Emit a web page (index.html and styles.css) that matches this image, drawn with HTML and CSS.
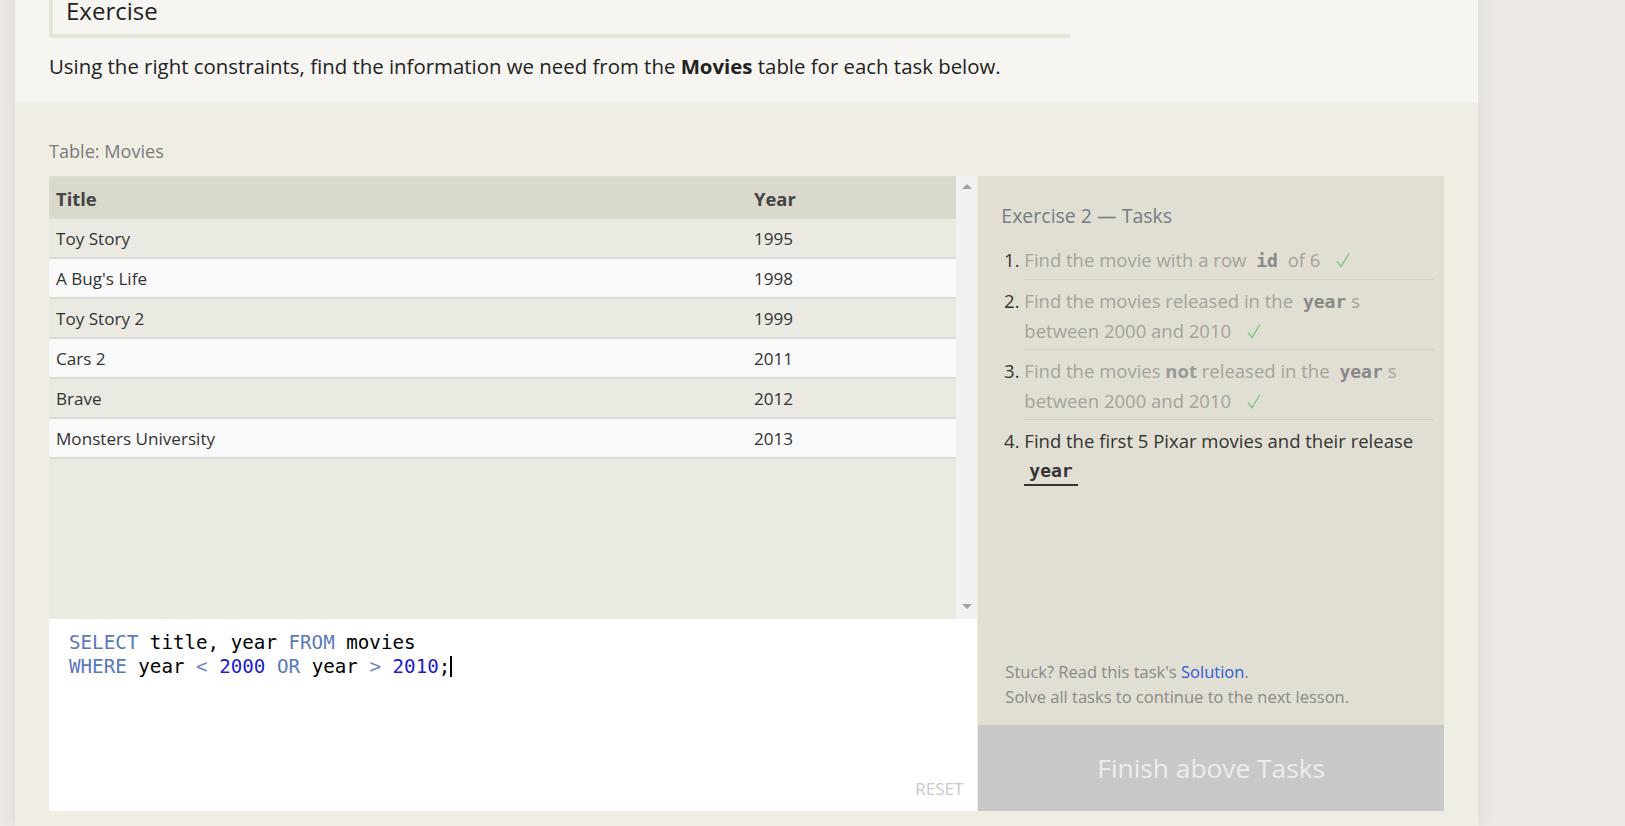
FILE: index.html
```html
<!DOCTYPE html>
<html lang="en">
<head>
<meta charset="utf-8">
<title>SQL Lesson – Exercise 2</title>
<link rel="stylesheet" href="styles.css">
</head>
<body>
<div class="main">
  <section class="intro">
    <div class="ex-head"><h2>Exercise</h2></div>
    <p class="lead">Using the right constraints, find the information we need from the <strong>Movies</strong> table for each task below.</p>
  </section>
  <section class="exercise">
    <div class="table-label">Table: Movies</div>
    <div class="workspace">
      <div class="left">
        <div class="results">
          <div class="table-scroll">
            <table class="movies">
              <thead>
                <tr><th class="c-title">Title</th><th class="c-year">Year</th></tr>
              </thead>
              <tbody>
                <tr><td>Toy Story</td><td>1995</td></tr>
                <tr><td>A Bug's Life</td><td>1998</td></tr>
                <tr><td>Toy Story 2</td><td>1999</td></tr>
                <tr><td>Cars 2</td><td>2011</td></tr>
                <tr><td>Brave</td><td>2012</td></tr>
                <tr><td>Monsters University</td><td>2013</td></tr>
              </tbody>
            </table>
          </div>
          <div class="scrollbar">
            <span class="arrow up"></span>
            <span class="arrow down"></span>
          </div>
        </div>
        <div class="editor">
          <pre class="code"><span class="kw">SELECT</span> title, year <span class="kw">FROM</span> movies
<span class="kw">WHERE</span> year <span class="op">&lt;</span> <span class="num">2000</span> <span class="kw">OR</span> year <span class="op">&gt;</span> <span class="num">2010</span>;<span class="caret"></span></pre>
          <div class="reset-row"><span class="reset">RESET</span></div>
        </div>
      </div>
      <div class="tasks">
        <div class="tasks-body">
          <h3 class="tasks-title">Exercise 2 — Tasks</h3>
          <ol class="task-list">
            <li class="done"><span>Find the movie with a row <code>id</code> of 6 <svg class="check" viewBox="0 0 14 16" width="14" height="16"><path d="M1 9.5 L5 14.5 L13 1.5" fill="none" stroke="#7cc87c" stroke-width="1.4"/></svg></span></li>
            <li class="done"><span>Find the movies released in the <code>year</code>s between 2000 and 2010 <svg class="check" viewBox="0 0 14 16" width="14" height="16"><path d="M1 9.5 L5 14.5 L13 1.5" fill="none" stroke="#7cc87c" stroke-width="1.4"/></svg></span></li>
            <li class="done"><span>Find the movies <strong>not</strong> released in the <code>year</code>s between 2000 and 2010 <svg class="check" viewBox="0 0 14 16" width="14" height="16"><path d="M1 9.5 L5 14.5 L13 1.5" fill="none" stroke="#7cc87c" stroke-width="1.4"/></svg></span></li>
            <li class="current"><span>Find the first 5 Pixar movies and their release <code class="active">year</code></span></li>
          </ol>
          <div class="help">
            <div>Stuck? Read this task's <a class="link">Solution</a>.</div>
            <div>Solve all tasks to continue to the next lesson.</div>
          </div>
        </div>
        <div class="finish">Finish above Tasks</div>
      </div>
    </div>
  </section>
</div>
</body>
</html>
```

FILE: styles.css
```css
html, body {
  margin: 0;
  padding: 0;
}
body {
  background: #ece8e4;
  font-family: "Open Sans", "Liberation Sans", sans-serif;
  color: #333;
  height: 826px;
  overflow: hidden;
}
.main {
  margin-left: 15px;
  width: 1463px;
  box-shadow: -6px 0 10px rgba(0, 0, 0, 0.03), 6px 0 12px rgba(0, 0, 0, 0.04);
}

/* intro */
.intro {
  background: #f6f5f1;
  padding: 0 34px 22px;
  margin-top: -15px;
}
.ex-head {
  width: 1004px;
  border-left: 4px solid #e6e4da;
  border-bottom: 4px solid #e6e4da;
  padding: 8px 0 5px 13px;
}
.ex-head h2 {
  margin: 0;
  font-weight: 400;
  font-size: 24px;
  line-height: 36px;
  color: #222;
}
.lead {
  margin: 14px 0 0;
  font-size: 20.4px;
  line-height: 28px;
  color: #222;
}
.lead strong { font-weight: 700; }

/* exercise area */
.exercise {
  background: #f0ede5;
  padding: 37px 34px 15px;
}
.table-label {
  font-size: 18.1px;
  line-height: 24px;
  color: #7a7a7a;
  margin-bottom: 13px;
}
.workspace {
  display: flex;
  height: 635px;
}
.left {
  width: 929px;
  display: flex;
  flex-direction: column;
}
.results {
  height: 443px;
  display: flex;
  background: #eae9e2;
}
.table-scroll {
  flex: 1;
  border-top: 1px solid #dedbd9;
}
.movies {
  width: 100%;
  border-collapse: collapse;
  font-size: 17.1px;
}
.movies th {
  background: #dad9cd;
  text-align: left;
  font-weight: 700;
  color: #444;
  height: 42px;
  padding: 0 7px;
  font-size: 18.4px;
}
.movies th.c-title { width: 684px; }
.movies td {
  height: 38px;
  padding: 0 7px;
  border-bottom: 2px solid #dddcd8;
  color: #333;
}
.movies tbody tr:nth-child(odd) td { background: #eae9e2; }
.movies tbody tr:nth-child(even) td { background: #f9f9f9; }

.scrollbar {
  width: 21px;
  background: #f1f1f1;
  display: flex;
  flex-direction: column;
  justify-content: space-between;
  align-items: center;
  padding: 8px 0 10px;
  box-sizing: border-box;
}
.arrow {
  width: 0;
  height: 0;
  border-left: 5px solid transparent;
  border-right: 5px solid transparent;
}
.arrow.up { border-bottom: 5px solid #a3a3a3; }
.arrow.down { border-top: 5px solid #a3a3a3; }

.editor {
  flex: 1;
  background: #fff;
  display: flex;
  flex-direction: column;
  padding: 12px 14px 11px 20px;
}
.code {
  flex: 1;
  margin: 0;
  font-family: "DejaVu Sans Mono", "Liberation Mono", monospace;
  font-size: 19.2px;
  line-height: 24px;
  color: #000;
}
.kw { color: #5a78ba; }
.op { color: #7187c8; }
.num { color: #1c1ccc; }
.caret {
  display: inline-block;
  width: 2px;
  height: 21px;
  background: #000;
  vertical-align: -4px;
}
.reset-row {
  display: flex;
  justify-content: flex-end;
}
.reset {
  font-size: 17px;
  color: #c9c9c9;
  line-height: 22px;
}

/* tasks */
.tasks {
  width: 466px;
  margin-left: 1px;
  display: flex;
  flex-direction: column;
  background: #e1dfd4;
}
.tasks-body {
  flex: 1;
  display: flex;
  flex-direction: column;
  padding: 26px 10px 16px 23px;
}
.tasks-title {
  margin: 0;
  font-weight: 400;
  font-size: 19.5px;
  line-height: 28px;
  color: #777b82;
}
.task-list {
  margin: 9px 0 0;
  padding: 0 0 0 23px;
  font-size: 18.5px;
  line-height: 29.5px;
}
.task-list li {
  padding: 6px 0 3px;
  border-bottom: 1px solid #d2d0c6;
}
.task-list li:last-child { border-bottom: none; }
.task-list li::marker { color: #333; }
.task-list li.done { color: #a3a29d; }
.task-list li.current { color: #333; }
.task-list code {
  font-family: "DejaVu Sans Mono", "Liberation Mono", monospace;
  font-weight: 700;
  font-size: 18px;
  padding: 0 5px;
  color: #888;
}
.task-list strong { color: #999; }
.task-list li.current code {
  color: #333;
  border-bottom: 2px solid #333;
  padding-bottom: 3px;
}
.check {
  margin-left: 11px;
  vertical-align: -1px;
}
.help {
  margin-top: auto;
  font-size: 16.5px;
  line-height: 25px;
  color: #888;
  padding-left: 4px;
}
.link { color: #2f5bd8; }
.finish {
  height: 86px;
  background: #c8c8c8;
  color: #ededed;
  font-size: 26.3px;
  display: flex;
  align-items: center;
  justify-content: center;
}
```
